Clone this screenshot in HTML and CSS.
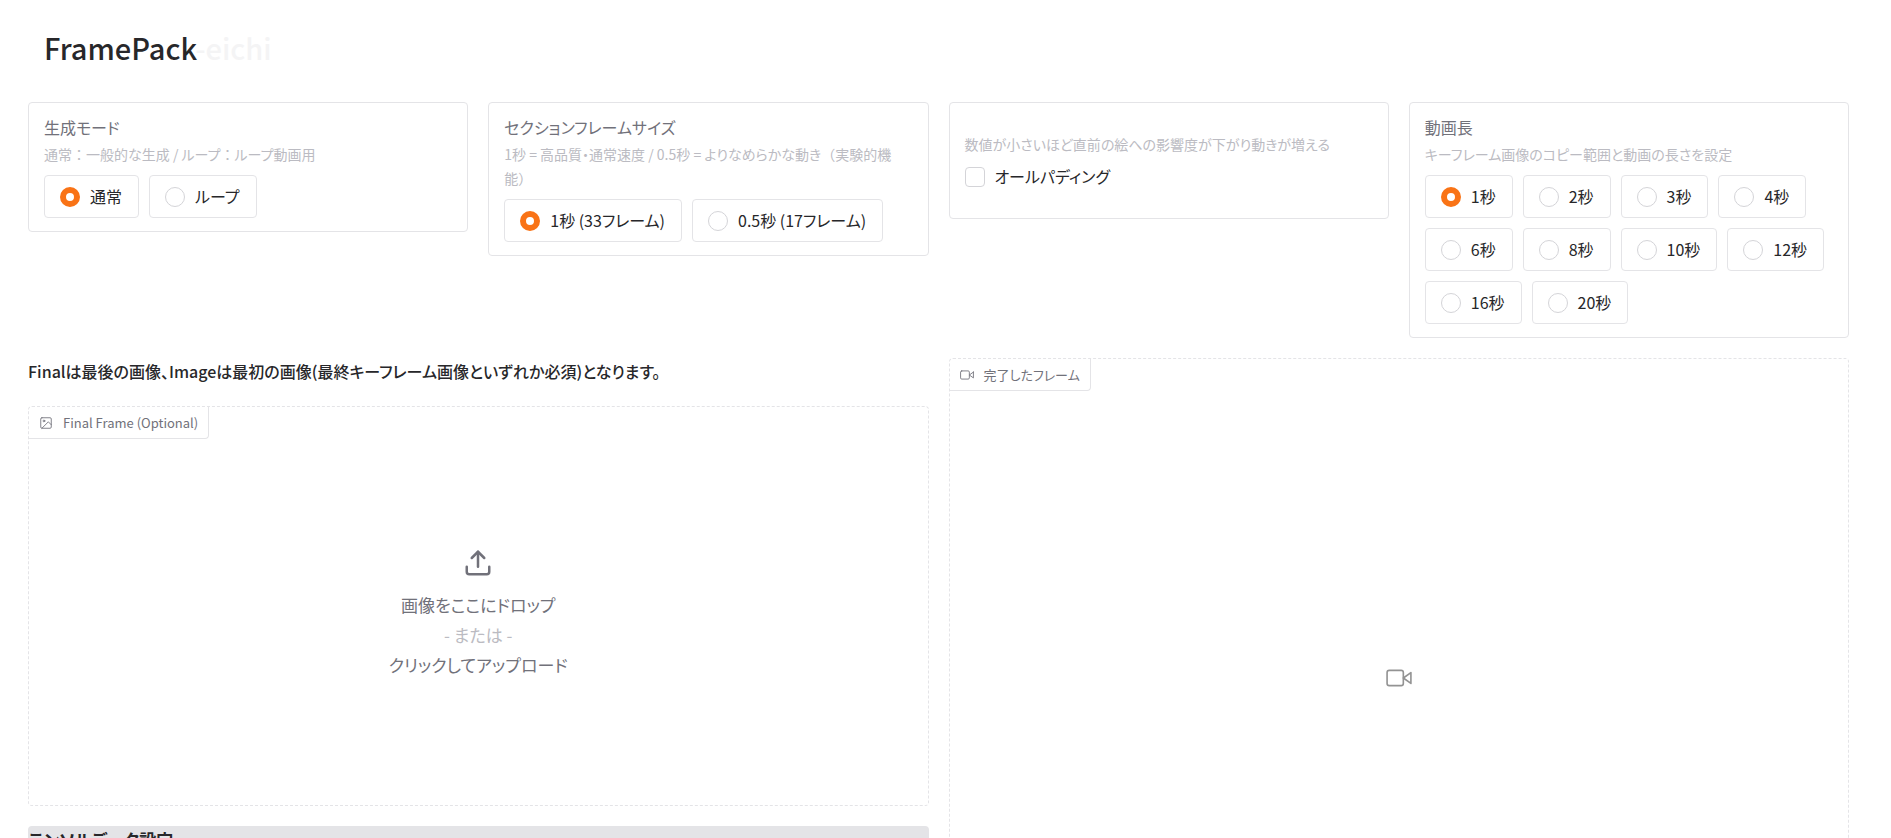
FILE: index.html
```html
<!DOCTYPE html>
<html lang="ja">
<head>
    <meta charset="UTF-8">
    <meta name="viewport" content="width=device-width, initial-scale=1.0">
    <title>FramePack-eichi</title>
    <link rel="stylesheet" href="styles.css">
</head>
<body>
    <main class="container">
        <h1 class="title">FramePack<span class="suffix">-eichi</span></h1>

        <div class="row settings">
            <fieldset class="block">
                <legend class="label">生成モード</legend>
                <p class="info">通常<span class="wide">：</span>一般的な生成 / ループ<span class="wide">：</span>ループ動画用</p>
                <div class="options">
                    <label class="option"><input type="radio" name="mode" checked><span>通常</span></label>
                    <label class="option"><input type="radio" name="mode"><span>ループ</span></label>
                </div>
            </fieldset>

            <fieldset class="block">
                <legend class="label">セクションフレームサイズ</legend>
                <p class="info">1秒 = 高品質・通常速度 / 0.5秒 = よりなめらかな動き<span class="wide">（</span>実験的機能<span class="wide">）</span></p>
                <div class="options">
                    <label class="option"><input type="radio" name="size" checked><span>1秒 (33フレーム)</span></label>
                    <label class="option"><input type="radio" name="size"><span>0.5秒 (17フレーム)</span></label>
                </div>
            </fieldset>

            <div class="block padding-block">
                <p class="info">数値が小さいほど直前の絵への影響度が下がり動きが増える</p>
                <label class="check"><input type="checkbox"><span>オールパディング</span></label>
            </div>

            <fieldset class="block">
                <legend class="label">動画長</legend>
                <p class="info">キーフレーム画像のコピー範囲と動画の長さを設定</p>
                <div class="options">
                    <label class="option"><input type="radio" name="length" checked><span>1秒</span></label>
                    <label class="option"><input type="radio" name="length"><span>2秒</span></label>
                    <label class="option"><input type="radio" name="length"><span>3秒</span></label>
                    <label class="option"><input type="radio" name="length"><span>4秒</span></label>
                    <label class="option"><input type="radio" name="length"><span>6秒</span></label>
                    <label class="option"><input type="radio" name="length"><span>8秒</span></label>
                    <label class="option"><input type="radio" name="length"><span>10秒</span></label>
                    <label class="option"><input type="radio" name="length"><span>12秒</span></label>
                    <label class="option"><input type="radio" name="length"><span>16秒</span></label>
                    <label class="option"><input type="radio" name="length"><span>20秒</span></label>
                </div>
            </fieldset>
        </div>

        <div class="row panels">
            <div class="column">
                <p class="note">Finalは最後の画像、Imageは最初の画像(最終キーフレーム画像といずれか必須)となります。</p>
                <div class="media upload">
                    <div class="media-label">
                        <svg class="icon" viewBox="0 0 24 24"><rect x="3" y="3" width="18" height="18" rx="2"/><circle cx="8.5" cy="8.5" r="1.5"/><path d="M21 15l-5-5L5 21"/></svg>
                        <span>Final Frame (Optional)</span>
                    </div>
                    <button type="button" class="drop">
                        <svg class="drop-icon" viewBox="0 0 24 24"><path d="M21 15v4a2 2 0 0 1-2 2H5a2 2 0 0 1-2-2v-4"/><path d="M17 8l-5-5-5 5"/><path d="M12 3v12"/></svg>
                        <span>画像をここにドロップ</span>
                        <span class="or">- または -</span>
                        <span>クリックしてアップロード</span>
                    </button>
                </div>
                <section class="group">
                    <h3 class="group-title">テンソルデータ設定</h3>
                </section>
            </div>

            <div class="column">
                <div class="media video">
                    <div class="media-label">
                        <svg class="icon" viewBox="0 0 24 24"><path d="M23 7l-7 5 7 5V7z"/><rect x="1" y="5" width="15" height="14" rx="2"/></svg>
                        <span>完了したフレーム</span>
                    </div>
                    <svg class="empty-icon" viewBox="0 0 24 24"><path d="M23 7l-7 5 7 5V7z"/><rect x="1" y="5" width="15" height="14" rx="2"/></svg>
                </div>
            </div>
        </div>
    </main>
</body>
</html>
```

FILE: styles.css
```css
*{
    box-sizing: border-box;
}
body{
    margin: 0;
    background-color: white;
    color: #27272a;
    font-family: "Noto Sans CJK JP", sans-serif;
    font-size: 16px;
    line-height: 24px;
    font-feature-settings: "palt";
    overflow-x: hidden;
}
.container{
    padding: 26px 42px 0 28px;
}
p, h1, h3, fieldset, legend{
    margin: 0;
    padding: 0;
}
svg{
    fill: none;
    stroke: currentColor;
    stroke-linecap: round;
    stroke-linejoin: round;
}
.title{
    padding: 0 16px;
    font-size: 29px;
    line-height: 42px;
    font-weight: 500;
}
.title .suffix{
    color: #f4f4f5;
}
.row{
    display: grid;
    gap: 20px;
}
.settings{
    grid-template-columns: repeat(4, 1fr);
    align-items: start;
    margin-top: 34px;
}
.panels{
    grid-template-columns: repeat(2, 1fr);
    margin-top: 20px;
}
.block{
    min-width: 0;
    padding: 12px 15px 13px;
    border: 1px solid #e4e4e7;
    border-radius: 4px;
}
.label{
    float: left;
    width: 100%;
    color: #71717a;
    font-size: 16px;
}
.info{
    clear: both;
    padding-top: 3px;
    color: #bbbbc2;
    font-size: 14px;
}
.wide{
    font-feature-settings: normal;
}
.options{
    display: flex;
    flex-wrap: wrap;
    gap: 10px;
    margin-top: 9px;
}
.option{
    display: flex;
    align-items: center;
    gap: 10px;
    height: 43px;
    padding: 0 16px 0 15px;
    border: 1px solid #e4e4e7;
    border-radius: 4px;
}
.option span, .check span{
    padding-bottom: 2px;
}
input{
    appearance: none;
    flex: none;
    width: 20px;
    height: 20px;
    margin: 0;
    border: 1px solid #d4d4d8;
    background-color: white;
}
input[type="radio"]{
    border-radius: 50%;
}
input[type="radio"]:checked{
    border: 6px solid #f97316;
}
input[type="checkbox"]{
    border-radius: 4px;
}
.padding-block{
    padding: 26px 15px 28px;
}
.check{
    display: flex;
    align-items: center;
    gap: 10px;
    margin-top: 8px;
}
.column{
    display: flex;
    flex-direction: column;
    gap: 20px;
    min-width: 0;
}
.note{
    padding-bottom: 2px;
    line-height: 26px;
    font-weight: 500;
}
.media{
    position: relative;
    display: flex;
    align-items: center;
    justify-content: center;
    border: 1px dashed #e4e4e7;
    border-radius: 4px;
}
.upload{
    height: 400px;
}
.video{
    height: 640px;
}
/* tab in the corner of the media area */
.media-label{
    position: absolute;
    top: 0;
    left: 0;
    display: flex;
    align-items: center;
    gap: 10px;
    height: 32px;
    padding: 0 10px;
    border: 1px solid #e4e4e7;
    border-top: 0;
    border-left: 0;
    border-radius: 4px 0 4px 0;
    color: #71717a;
    font-size: 13px;
}
.icon{
    width: 14px;
    height: 14px;
    stroke-width: 1.5;
}
.drop{
    display: flex;
    flex-direction: column;
    align-items: center;
    width: 100%;
    height: 100%;
    justify-content: center;
    padding-top: 16px;
    border: 0;
    background: none;
    color: #71717a;
    font: inherit;
    font-size: 17px;
    line-height: 30px;
    cursor: pointer;
}
.drop-icon{
    width: 30px;
    height: 30px;
    margin-bottom: 12px;
    stroke-width: 2;
}
.or{
    color: #bbbbc2;
}
.empty-icon{
    width: 26px;
    height: 26px;
    color: #939393;
    stroke-width: 1.5;
}
.group{
    border-radius: 4px;
    background-color: #e4e4e7;
}
.group-title{
    font-size: 17px;
    line-height: 27px;
}
```
